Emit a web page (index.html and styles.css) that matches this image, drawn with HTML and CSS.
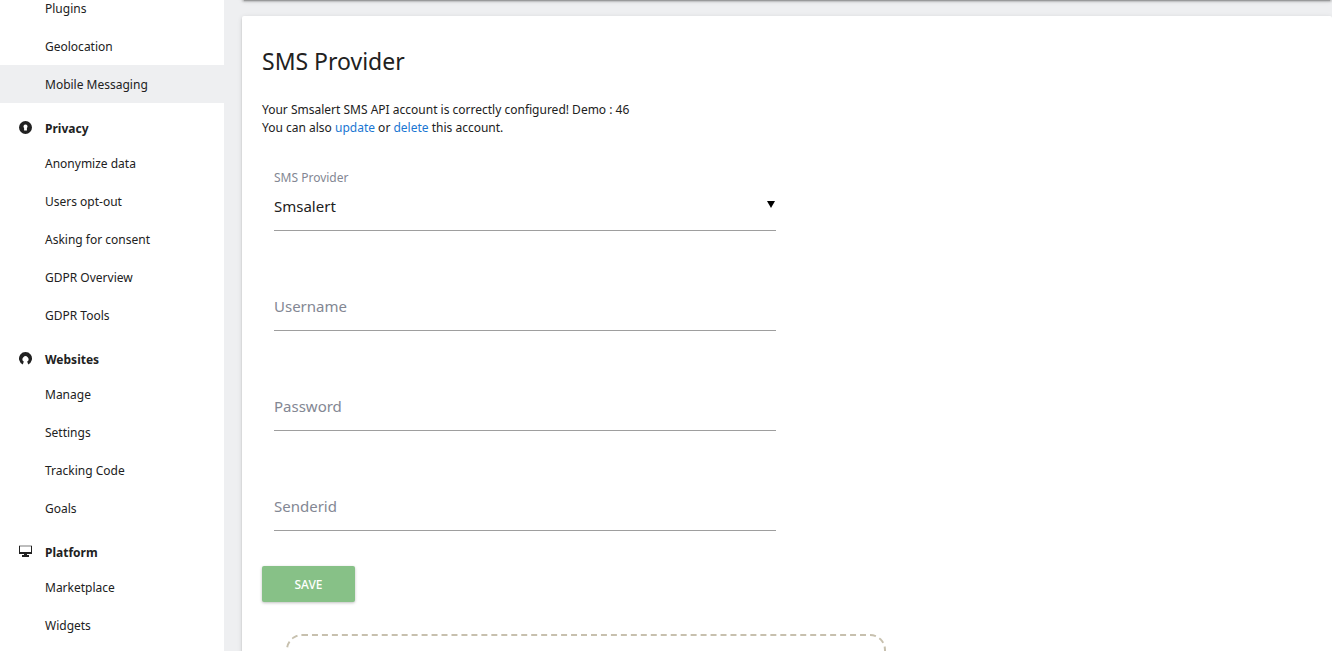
FILE: index.html
```html
<!DOCTYPE html>
<html lang="en">
<head>
<meta charset="utf-8">
<title>Mobile Messaging</title>
<link rel="stylesheet" href="styles.css">
</head>
<body>
<div class="page">
  <nav class="sidebar" aria-label="Administration">
    <ul class="menu">
      <li><a class="item" href="#">Plugins</a></li>
      <li><a class="item" href="#">Geolocation</a></li>
      <li><a class="item active" href="#">Mobile Messaging</a></li>
    </ul>
    <h3 class="group">
      <svg class="icon" viewBox="0 0 14 14" aria-hidden="true"><circle cx="6.5" cy="6.5" r="6.5" fill="#212121"/><path d="M6.5 3.4A2.100 2.100 0 0 1 7.900 7V9.500H5.100V7A2.100 2.100 0 0 1 6.500 3.400Z" fill="#fff"/></svg>
      Privacy
    </h3>
    <ul class="menu">
      <li><a class="item" href="#">Anonymize data</a></li>
      <li><a class="item" href="#">Users opt-out</a></li>
      <li><a class="item" href="#">Asking for consent</a></li>
      <li><a class="item" href="#">GDPR Overview</a></li>
      <li><a class="item" href="#">GDPR Tools</a></li>
    </ul>
    <h3 class="group">
      <svg class="icon" viewBox="0 0 14 14" aria-hidden="true"><path d="M3.8 12.500A6.500 6.500 0 1 1 9.200 12.500L8.200 9.600A2.900 2.900 0 1 0 4.800 9.600Z" fill="#212121"/></svg>
      Websites
    </h3>
    <ul class="menu">
      <li><a class="item" href="#">Manage</a></li>
      <li><a class="item" href="#">Settings</a></li>
      <li><a class="item" href="#">Tracking Code</a></li>
      <li><a class="item" href="#">Goals</a></li>
    </ul>
    <h3 class="group">
      <svg class="icon" viewBox="0 0 14 14" aria-hidden="true"><path d="M0 0H13V2H0Z" fill="#bdbdbd"/><path d="M0 1H1V7H12V1H13V9H8V10H10V12H3V10H5V9H0Z" fill="#212121"/></svg>
      Platform
    </h3>
    <ul class="menu">
      <li><a class="item" href="#">Marketplace</a></li>
      <li><a class="item" href="#">Widgets</a></li>
    </ul>
  </nav>
  <main class="content">
    <div class="card card-previous"></div>
    <section class="card card-main">
      <h2 class="title">SMS Provider</h2>
      <p class="intro">Your Smsalert SMS API account is correctly configured! Demo : 46<br>You can also <a href="#">update</a> or <a href="#">delete</a> this account.</p>
      <form class="form">
        <div class="field field-select">
          <label class="small-label" for="provider">SMS Provider</label>
          <select class="control" id="provider"><option>Smsalert</option></select>
          <svg class="caret" viewBox="0 0 8 7" aria-hidden="true"><path d="M0 0H8L4 7Z"/></svg>
        </div>
        <div class="field"><input class="control" type="text" aria-label="Username" placeholder="Username"></div>
        <div class="field"><input class="control" type="password" aria-label="Password" placeholder="Password"></div>
        <div class="field"><input class="control" type="text" aria-label="Senderid" placeholder="Senderid"></div>
      </form>
      <button class="save" type="button">SAVE</button>
      <div class="help"></div>
    </section>
  </main>
</div>
</body>
</html>
```
FILE: styles.css
```css
* { box-sizing: border-box; }
body {
  margin: 0;
  background: #eeeff1;
  color: #212121;
  font: 12px/18px "Noto Sans", "Open Sans", sans-serif;
}
.page { display: flex; height: 100vh; overflow: hidden; }
.sidebar {
  flex: 0 0 224px;
  margin-top: -11px;
  background: #fff;
}
.menu { list-style: none; margin: 0; padding: 0; }
.item {
  display: block;
  padding: 11px 20px 9px 45px;
  color: #212121;
  text-decoration: none;
}
.item.active { background: #eeeff1; }
.group {
  display: flex;
  align-items: center;
  gap: 12px;
  margin: 0;
  padding: 17px 0 6px 19px;
  font-size: 12px;
  font-weight: 700;
}
.icon { width: 14px; height: 14px; margin-bottom: 2px; }
.content { flex: 1; min-width: 0; padding-left: 18px; }
.card {
  background: #fff;
  border-radius: 2px;
  box-shadow: 0 2px 2px 0 rgba(0,0,0,.14), 0 1px 5px 0 rgba(0,0,0,.12), 0 3px 1px -2px rgba(0,0,0,.2);
}
.card-previous { height: 20px; margin: -20px 0 16px; }
.card-main { padding: 29px 0 40px 20px; }
.title { margin: 0; font-size: 23px; line-height: 32px; font-weight: 400; }
.intro { margin: 24px 0 32px; }
.intro a { color: #1976d2; text-decoration: none; }
.form { max-width: 526px; padding: 0 12px; display: grid; gap: 52px; }
.field { position: relative; padding-top: 3px; }
.field-select { padding-top: 0; }
.small-label { display: block; color: #838793; }
.control {
  appearance: none;
  display: block;
  width: 100%;
  height: 45px;
  padding: 0 0 4px;
  border: 0;
  border-bottom: 1px solid #9e9e9e;
  border-radius: 0;
  background: transparent;
  color: #212121;
  font: 15px/24px "Noto Sans", "Open Sans", sans-serif;
}
.control::placeholder { color: #838793; opacity: 1; }
.field-select .control { height: 44px; padding-bottom: 6px; }
.caret { position: absolute; right: 1px; bottom: 23px; width: 8px; height: 7px; }
.save {
  display: block;
  width: 93px;
  height: 36px;
  margin-top: 35px;
  border: 0;
  border-radius: 2px;
  background: #87c187;
  box-shadow: 0 1px 3px rgba(0,0,0,.25);
  color: #fff;
  font: 500 12px/36px "Noto Sans", "Open Sans", sans-serif;
}
.help {
  max-width: 600px;
  height: 120px;
  margin: 32px 0 0 24px;
  border: 2px dashed #c7c0ae;
  border-radius: 16px;
}
```
